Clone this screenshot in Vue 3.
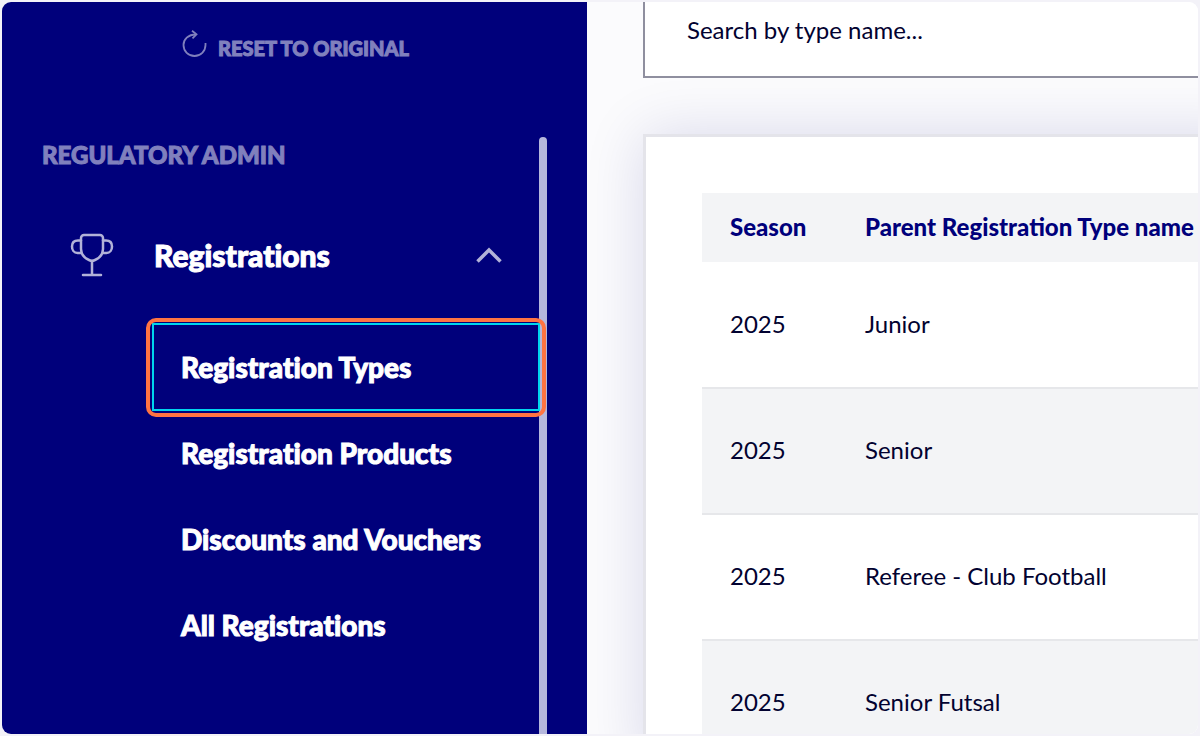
<template>
  <div class="frame">
    <aside class="sidebar">
      <button type="button" class="reset">
        <svg class="reset-icon" viewBox="0 0 28 36" fill="none" stroke="currentColor">
          <path d="M16 4.500C8 4.500 3.500 9.500 3.500 15a11 11 0 0 0 22 0v-2" stroke-width="1.800" />
          <path d="M12 .800l4.500 3.500-4 4" stroke-width="1.800" />
        </svg>
        <span>Reset to original</span>
      </button>
      <div class="scroll-area">
        <nav class="nav" aria-label="Regulatory admin">
          <h2 class="nav-title">Regulatory admin</h2>
          <button type="button" class="group" :aria-expanded="isOpen" @click="isOpen = !isOpen">
            <svg class="trophy" viewBox="0 0 44 44" fill="none" stroke="currentColor" stroke-width="2.500" stroke-linecap="round" stroke-linejoin="round">
              <path d="M14 2h16a3 3 0 0 1 3 3v11c0 5-3.500 9-8 11a7 7 0 0 1-6 0c-4.500-2-8-6-8-11V5a3 3 0 0 1 3-3z" />
              <path d="M11 7.500H8c-4 0-6 2.500-6 6s2 6.500 5.500 6.500H11" />
              <path d="M33 7.500h3c4 0 6 2.500 6 6s-2 6.500-5.500 6.500H33" />
              <path d="M22 28v14M13 42h18" />
            </svg>
            <span class="group-name">Registrations</span>
            <svg :class="['chevron', { closed: !isOpen }]" viewBox="0 0 26 16" fill="none" stroke="currentColor" stroke-width="3.500">
              <path d="M1.500 14.500L13 3l11.500 11.500" />
            </svg>
          </button>
          <ul v-if="isOpen" class="links">
            <li v-for="link in links" :key="link">
              <a href="#" :class="['link', { active: link === activeLink }]" @click.prevent="activeLink = link">{{ link }}</a>
            </li>
          </ul>
        </nav>
        <div class="thumb"></div>
      </div>
    </aside>

    <main class="content">
      <input v-model="search" class="search" type="text" placeholder="Search by type name..." aria-label="Search by type name" />
      <section class="card">
        <table class="types">
          <thead>
            <tr>
              <th scope="col" class="season">Season</th>
              <th scope="col">Parent Registration Type name</th>
            </tr>
          </thead>
          <tbody>
            <tr v-for="row in filteredRows" :key="row.name">
              <td>{{ row.season }}</td>
              <td>{{ row.name }}</td>
            </tr>
          </tbody>
        </table>
      </section>
    </main>
  </div>
</template>

<script setup>
import { computed, ref } from 'vue'

const isOpen = ref(true)
const search = ref('')
const activeLink = ref('Registration Types')

const links = ['Registration Types', 'Registration Products', 'Discounts and Vouchers', 'All Registrations']

const rows = [
  { season: 2025, name: 'Junior' },
  { season: 2025, name: 'Senior' },
  { season: 2025, name: 'Referee - Club Football' },
  { season: 2025, name: 'Senior Futsal' }
]

const filteredRows = computed(() => {
  const term = search.value.trim().toLowerCase()
  return rows.filter(row => row.name.toLowerCase().includes(term))
})
</script>

<style>
body {
  background: #f3f2f8;
}
</style>

<style scoped>
.frame {
  display: flex;
  height: calc(100vh - 4px);
  margin: 2px;
  border-radius: 9px;
  overflow: hidden;
  background: #fbfbfd;
  color: #020230;
  font-family: Lato, 'Open Sans', sans-serif;
  font-size: 24px;
}

.frame * {
  box-sizing: border-box;
}

.sidebar {
  flex: 0 0 585px;
  display: flex;
  flex-direction: column;
  padding: 12px 40px 0;
  background: #00007b;
  color: #fff;
  font-variant-ligatures: none;
  -webkit-text-stroke: 1px currentColor;
}

button {
  border: none;
  background: none;
  color: inherit;
  font: inherit;
  font-variant-ligatures: none;
  cursor: pointer;
}

.reset {
  display: flex;
  align-items: center;
  justify-content: center;
  gap: 10px;
  height: 68px;
  padding: 0;
  color: #8080bd;
  font-size: 20px;
  font-weight: 900;
  text-transform: uppercase;
}

.reset-icon {
  width: 28px;
  height: 36px;
}

.scroll-area {
  flex: 1;
  display: flex;
  min-height: 0;
  margin-top: 55px;
}

.nav {
  flex: 1;
}

.nav-title {
  margin: 0;
  color: #8080bd;
  font-size: 24px;
  font-weight: 900;
  line-height: 36px;
  text-transform: uppercase;
}

.thumb {
  flex: 0 0 8px;
  border-radius: 4px 4px 0 0;
  background: #b5b7dc;
}

.group {
  display: flex;
  align-items: center;
  width: 100%;
  height: 86px;
  margin: 39px 0 26px;
  padding: 0 37px 0 28px;
  font-size: 30px;
  font-weight: 900;
  text-align: left;
}

.trophy {
  width: 44px;
  height: 44px;
  color: #b2b2d8;
}

.group-name {
  flex: 1;
  margin-left: 40px;
}

.chevron {
  width: 26px;
  height: 16px;
  color: #b2b2d8;
}

.chevron.closed {
  transform: rotate(180deg);
}

.links {
  margin: 0 0 0 111px;
  padding: 0;
  list-style: none;
}

.link {
  position: relative;
  display: flex;
  align-items: center;
  height: 86px;
  padding-left: 28px;
  color: #fff;
  font-size: 28px;
  font-weight: 900;
  text-decoration: none;
}

.link.active {
  outline: 2px solid #00d5ee;
  outline-offset: -1px;
}

/* focus ring around the selected entry */
.link.active::after {
  content: '';
  position: absolute;
  inset: -6px -7px -7px;
  border: 4px solid #ff7442;
  border-radius: 10px;
}

.content {
  flex: 1;
  min-width: 0;
  display: flex;
  flex-direction: column;
  padding-left: 56px;
}

.search {
  flex: 0 0 76px;
  width: 100%;
  padding: 0 42px 20px;
  border: solid #8f8f9f;
  border-width: 0 0 2px 2px;
  border-radius: 0;
  background: #fff;
  color: inherit;
  font: inherit;
}

.search::placeholder {
  color: #020230;
  opacity: 1;
}

.card {
  flex: 1 0 auto;
  margin: 56px -56px 0 0;
  padding: 56px 0 0 56px;
  border: solid #e4e4ea;
  border-width: 3px 0 0 3px;
  background: #fff;
  box-shadow: 0 0 56px rgba(0, 0, 123, 0.14);
}

.types {
  width: 100%;
  border-collapse: collapse;
  white-space: nowrap;
}

.types th,
.types td {
  padding: 0 0 3px 28px;
  text-align: left;
}

.types th {
  height: 69px;
  background: #f3f4f6;
  color: #00007b;
  font-weight: 900;
}

.types .season {
  width: 135px;
}

.types td {
  height: 126px;
  border-bottom: 2px solid #e6e7ea;
}

.types tbody tr:nth-child(even) {
  background: #f3f4f6;
}
</style>
